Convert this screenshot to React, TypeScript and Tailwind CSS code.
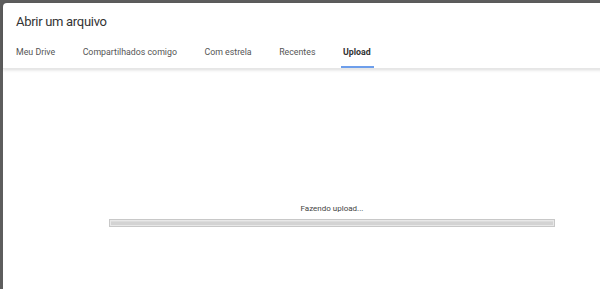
export default function App() {
  const tabs = [
    { label: "Meu Drive", active: false },
    { label: "Compartilhados comigo", active: false },
    { label: "Com estrela", active: false },
    { label: "Recentes", active: false },
    { label: "Upload", active: true },
  ];

  return (
    <div className="w-[600px] h-[289px] bg-[#5d5d5d] pl-[3px] pt-[3px] overflow-hidden font-['Roboto','Liberation_Sans',sans-serif]">
      <div className="w-[620px] h-[300px] bg-white rounded-tl-[4px] flex flex-col">
        <div className="shadow-[0_1px_3px_rgba(0,0,0,0.15)] border-b border-[#e6e6e6]">
          <div className="pl-[13px] pt-[9px] h-[35px] text-[13px] tracking-[-0.3px] text-[#333]">Abrir um arquivo</div>
          <div className="flex pl-[13px] gap-[27.5px] h-[30px]">
            {tabs.map((t) => (
              <div key={t.label} className="relative flex items-center">
                <span
                  className={
                    t.active
                      ? "text-[8.8px] font-bold text-[#333]"
                      : "text-[8.8px] text-[#555]"
                  }
                >
                  {t.label}
                </span>
                {t.active && (
                  <div className="absolute left-[-2px] right-[-3px] bottom-0 h-[2px] bg-[#6d9eeb]" />
                )}
              </div>
            ))}
          </div>
        </div>
        <div className="flex flex-col items-center w-[446px] ml-[106px] pt-[134px]">
          <div className="text-[8px] text-[#444] mb-[4px]">Fazendo upload...</div>
          <div className="w-full h-[8px] border border-[#c8c8c8] bg-[#e8e8e8] p-[1px]">
            <div className="h-full bg-[#d3d3d3] border-t border-[#dcdcdc]" />
          </div>
        </div>
      </div>
    </div>
  );
}
